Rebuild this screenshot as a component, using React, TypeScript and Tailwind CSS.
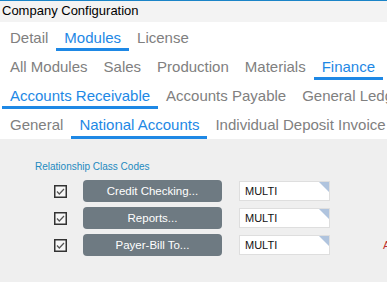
type Tab = { label: string; active?: boolean };

const rows: Tab[][] = [
  [{ label: "Detail" }, { label: "Modules", active: true }, { label: "License" }],
  [
    { label: "All Modules" },
    { label: "Sales" },
    { label: "Production" },
    { label: "Materials" },
    { label: "Finance", active: true },
  ],
  [
    { label: "Accounts Receivable", active: true },
    { label: "Accounts Payable" },
    { label: "General Ledger" },
  ],
  [
    { label: "General" },
    { label: "National Accounts", active: true },
    { label: "Individual Deposit Invoice" },
  ],
];

const codes = ["Credit Checking...", "Reports...", "Payer-Bill To..."];

function Check() {
  return (
    <svg width="13" height="13" viewBox="0 0 13 13" className="mt-[5px] shrink-0">
      <rect x="0.75" y="0.75" width="11.5" height="11.5" fill="#f7f7f7" stroke="#333" strokeWidth="1.5" />
      <path d="M3 6.5 L5.3 9 L10 4" fill="none" stroke="#555" strokeWidth="1.2" />
    </svg>
  );
}

export default function App() {
  return (
    <div className="w-[387px] h-[282px] overflow-hidden bg-[#efefef] font-['Liberation_Sans',Arial,sans-serif]">
      {/* Title bar */}
      <div className="h-[22px] bg-[#f3f3f3] border-t border-[#1a84c7] px-[2px] text-[13px] leading-[20px] text-black whitespace-nowrap">
        Company Configuration
      </div>

      {/* Tab rows */}
      <div className="bg-white">
        {rows.map((row, i) => (
          <div key={i} className={`flex px-[2px] whitespace-nowrap ${i === 3 ? "h-[30px]" : "h-[29px]"}`}>
            {row.map((t) => (
              <div
                key={t.label}
                className={`px-2 pt-[5px] text-[15px] leading-[21px] border-b-[3px] ${
                  t.active ? "text-[#1e88e5] border-[#1e88e5]" : "text-[#808080] border-transparent"
                }`}
              >
                {t.label}
              </div>
            ))}
          </div>
        ))}
      </div>

      {/* Relationship codes */}
      <div className="pt-[22px] pl-[35px]">
        <div className="text-[10px] leading-[12px] text-[#1d8ac0] whitespace-nowrap">Relationship Class Codes</div>
        <div className="mt-[7px] pl-[19px] flex flex-col gap-[5px]">
          {codes.map((c, i) => (
            <div key={c} className="flex items-start h-[22px] whitespace-nowrap">
              <Check />
              <button className="shrink-0 ml-[16px] w-[139px] h-[22px] rounded-[4px] bg-[#6e7a82] text-white text-[11.5px] leading-[22px]">
                {c}
              </button>
              <div className="shrink-0 relative ml-[17px] mt-[1px] w-[91px] h-[20px] bg-white border border-[#dedede] text-[11px] leading-[18px] pl-[5px] text-[#111]">
                MULTI
                <div className="absolute top-0 right-0 w-0 h-0 border-t-[10px] border-l-[10px] border-t-[#b0c4de] border-l-transparent" />
              </div>
              {i === 2 && (
                <span className="shrink-0 ml-[53px] mt-[4px] text-[11px] leading-[14px] text-[#c03030]">A</span>
              )}
            </div>
          ))}
        </div>
      </div>
    </div>
  );
}
